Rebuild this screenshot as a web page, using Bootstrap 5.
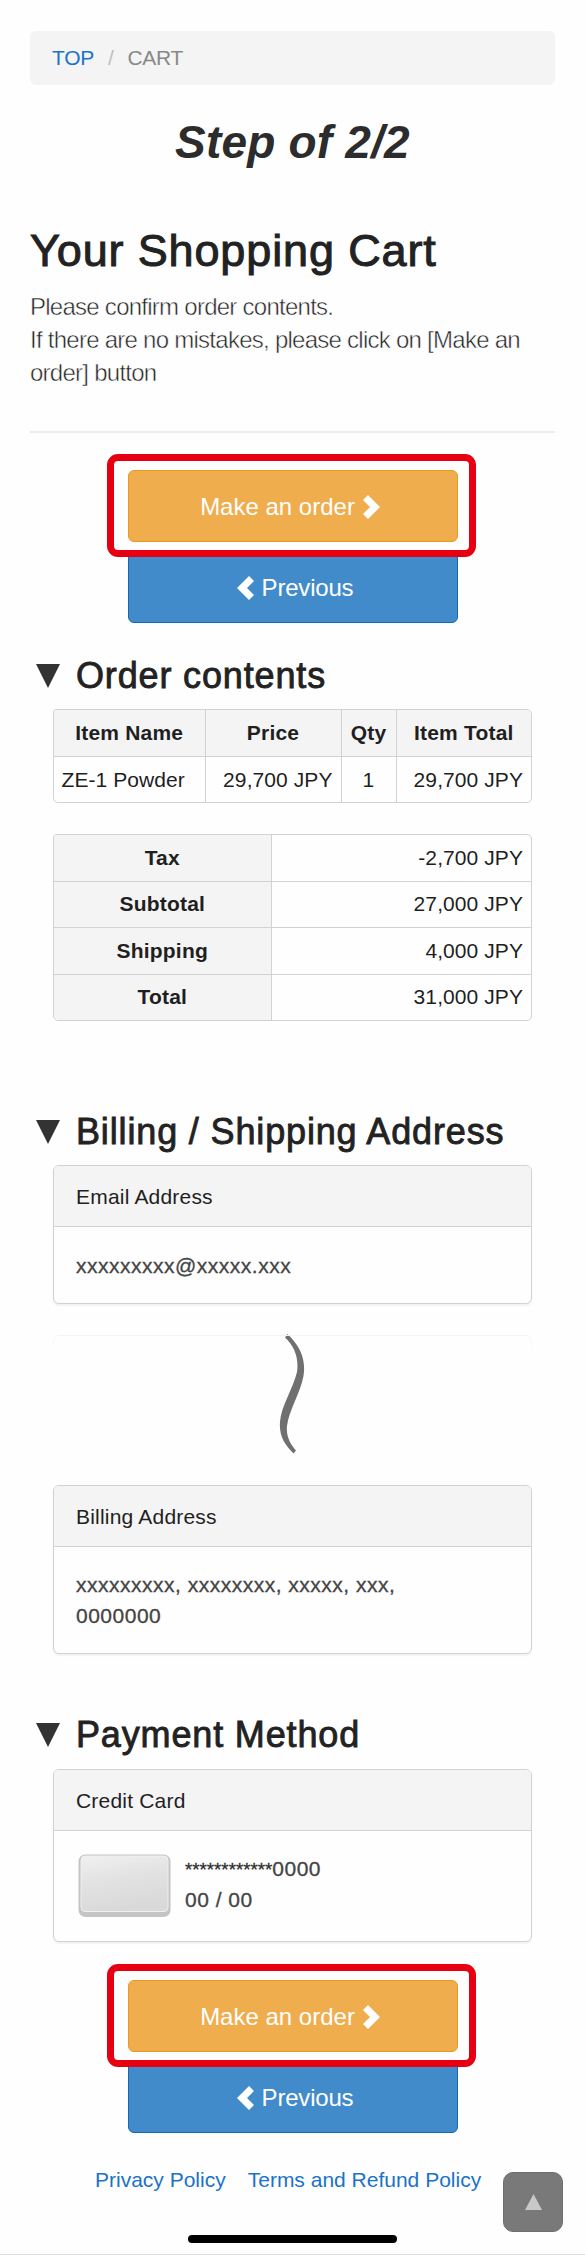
<!DOCTYPE html>
<html lang="en">
<head>
<meta charset="utf-8">
<meta name="viewport" content="width=device-width, initial-scale=1">
<title>Your Shopping Cart</title>
<link href="https://cdn.jsdelivr.net/npm/bootstrap@5.3.0/dist/css/bootstrap.min.css" rel="stylesheet">
<style>
body{font-family:"Liberation Sans",Arial,sans-serif;font-size:21px;line-height:30px;color:#1f1f1f;background:#fefefe;overflow-x:hidden}
a{color:#1a73c8;text-decoration:none}
.page{height:2255px;padding:31px 30px 0;border-bottom:1px solid #ddd;position:relative}
.crumbs{height:54px;background:#f4f4f4;border-radius:6px;padding:0 22px;margin:0;letter-spacing:-.3px}
.crumbs .breadcrumb-item+.breadcrumb-item{padding-left:14px}
.crumbs .breadcrumb-item+.breadcrumb-item::before{padding-right:14px;color:#c0c0c0}
.crumbs .active{color:#888}
.step{font-size:46px;line-height:50px;font-weight:700;font-style:italic;margin:32px 0 0;color:#2c2c2c;letter-spacing:.2px}
.headline{font-size:45px;line-height:50px;font-weight:400;margin:59px 0 0;letter-spacing:.86px;-webkit-text-stroke:1px #222;color:#222;white-space:nowrap}
.intro{font-size:24px;line-height:33px;margin:14px 0 0;color:#222;letter-spacing:-.74px;-webkit-text-stroke:.5px #fefefe;white-space:nowrap}
.rule{height:2px;background:#ececec;margin:42px 0 21px}
.actions{width:369px;margin:0 auto;position:relative;left:-1px}
.ring{border:7px solid #e60012;border-radius:11px;padding:9px 11px 8px 14px;height:103px;position:relative;z-index:1;background:#fefefe}
.act{display:flex;align-items:center;justify-content:center;width:330px;height:72px;border-radius:6px;font-size:24px;border:1px solid;color:#fff;padding:2px 0 0}
.act-go{background:#f0ad4e;border-color:#eb9a1f;padding-right:6px}
.act-back{background:#428bca;border-color:#1468b5;margin:-6px 0 0 21px;padding-left:4px;letter-spacing:-.2px}
.sect{font-size:36px;line-height:40px;font-weight:400;letter-spacing:.85px;color:#222;-webkit-text-stroke:.85px #222;display:flex;align-items:center;padding-left:5.5px;margin:0;white-space:nowrap}
.sect svg{margin-right:16.5px;flex:none}
.block{margin:0 23px}
.grid{width:479px;border:1px solid #d2d2d2;border-radius:3px 5px 5px 5px;border-collapse:separate;border-spacing:0;table-layout:fixed;margin:0;overflow:hidden;color:#1f1f1f;letter-spacing:.08px}
.grid th,.grid td{padding:0 8px 0 7.5px;border:0 solid #d2d2d2;border-right-width:1px;border-bottom-width:1px;white-space:nowrap;font-size:21px;vertical-align:middle}
.grid tr>:last-child{border-right-width:0}
.grid tbody tr:last-child>*{border-bottom-width:0}
.grid th{background:#f4f4f4;text-align:center;letter-spacing:.2px}
.box{border:1px solid #d2d2d2;border-radius:6px;background:#fefefe;box-shadow:0 1.5px 1.5px rgba(0,0,0,.05);overflow:hidden}
.box-title{background:#f4f4f4;border-bottom:1px solid #d2d2d2;padding:1px 22px 0;height:61px;display:flex;align-items:center;letter-spacing:.2px}
.box-text{padding:0 22px;color:#444;letter-spacing:.5px;-webkit-text-stroke:.3px #444;line-height:31px}
.ghost{height:16px;border:1px solid #f4f4f4;border-bottom:0;border-radius:6px 6px 0 0;-webkit-mask:linear-gradient(#000,transparent);mask:linear-gradient(#000,transparent)}
.stars{font-size:18.7px;letter-spacing:0;color:#1f1f1f}
.totop{position:absolute;left:503px;top:2172px;width:60px;height:60px;border-radius:10px;background:#797979;border:1px solid #6e6e6e}
.homebar{position:absolute;left:188px;top:2235px;width:209px;height:8px;border-radius:4px;background:#000}
</style>
</head>
<body>
<main class="page">
  <nav><ol class="breadcrumb crumbs align-items-center">
    <li class="breadcrumb-item"><a href="#">TOP</a></li><li class="breadcrumb-item active">CART</li>
  </ol></nav>
  <h2 class="step text-center">Step of 2/2</h2>
  <h1 class="headline">Your Shopping Cart</h1>
  <p class="intro">Please confirm order contents.<br>If there are no mistakes, please click on [Make an<br>order] button</p>
  <div class="rule"></div>

  <div class="actions">
    <div class="ring"><button class="btn act act-go">Make an order<svg class="ms-2" width="17" height="24" viewBox="0 0 17 24"><path d="M5 0L17 12 5 24 0 19 7 12 0 5z" fill="#fff"/></svg></button></div>
    <button class="btn act act-back"><svg class="me-2" width="17" height="24" viewBox="0 0 17 24"><path d="M12 0L0 12 12 24 17 19 10 12 17 5z" fill="#fff"/></svg>Previous</button>
  </div>

  <h2 class="sect" style="margin-top:33px"><svg width="24" height="24" viewBox="0 0 24 24"><path d="M0 0H24L12 24z" fill="#333"/></svg><span>Order contents</span></h2>
  <div class="block" style="margin-top:13px">
    <table class="grid">
      <colgroup><col style="width:152px"><col style="width:135.5px"><col style="width:55.5px"><col></colgroup>
      <thead><tr style="height:47px"><th>Item Name</th><th>Price</th><th>Qty</th><th>Item Total</th></tr></thead>
      <tbody><tr style="height:45px"><td>ZE-1 Powder</td><td class="text-end">29,700 JPY</td><td class="text-center">1</td><td class="text-end">29,700 JPY</td></tr></tbody>
    </table>
    <table class="grid" style="margin-top:31px">
      <colgroup><col style="width:218px"><col></colgroup>
      <tbody>
        <tr style="height:46.5px"><th>Tax</th><td class="text-end">-2,700 JPY</td></tr>
        <tr style="height:46.5px"><th>Subtotal</th><td class="text-end">27,000 JPY</td></tr>
        <tr style="height:46.5px"><th>Shipping</th><td class="text-end">4,000 JPY</td></tr>
        <tr style="height:45.5px"><th>Total</th><td class="text-end">31,000 JPY</td></tr>
      </tbody>
    </table>
  </div>

  <h2 class="sect" style="margin-top:91px"><svg width="24" height="24" viewBox="0 0 24 24"><path d="M0 0H24L12 24z" fill="#333"/></svg><span>Billing / Shipping Address</span></h2>
  <div class="block" style="margin-top:13px">
    <div class="box" style="height:139px"><div class="box-title">Email Address</div><div class="box-text" style="padding-top:23px">xxxxxxxxx@xxxxx.xxx</div></div>
    <div class="ghost" style="margin-top:31px"></div>
    <svg class="d-block" style="margin:-17px 0 0 226px" width="26" height="120" viewBox="0 0 26 120"><path d="M8.500 0C22 13 27 26 24.500 42C21 60 10 76 8 92C7 102 11 110 17 116.500L14.500 119.500C5 110 0 101 1 88C2 72 14 55 18 38C20 23 15 12 6 3.500Z" fill="#707070"/></svg>
    <div class="box" style="margin-top:31px;height:169px"><div class="box-title">Billing Address</div><div class="box-text" style="padding-top:22px">xxxxxxxxx, xxxxxxxx, xxxxx, xxx,<br>0000000</div></div>
  </div>

  <h2 class="sect" style="margin-top:61px"><svg width="24" height="24" viewBox="0 0 24 24"><path d="M0 0H24L12 24z" fill="#333"/></svg><span>Payment Method</span></h2>
  <div class="block" style="margin-top:14px">
    <div class="box" style="height:173px"><div class="box-title">Credit Card</div>
      <div class="d-flex" style="padding:23px 0 0 24px">
        <svg width="93" height="64" viewBox="0 0 93 64"><defs><linearGradient id="k" x2=".3" y2="1"><stop stop-color="#f0f0f0"/><stop offset=".5" stop-color="#e2e2e2"/><stop offset="1" stop-color="#d9d9d9"/></linearGradient></defs><rect x=".5" y=".5" width="92" height="62.500" rx="7" fill="#c4c4c4"/><rect x="3" y="2" width="87" height="55.500" rx="4" fill="url(#k)" stroke="#efefef"/></svg>
        <div class="box-text" style="padding:0 0 0 14px;line-height:30px"><span class="stars">************</span>0000<br>00 / 00</div>
      </div>
    </div>
  </div>

  <div class="actions" style="margin-top:22px">
    <div class="ring"><button class="btn act act-go">Make an order<svg class="ms-2" width="17" height="24" viewBox="0 0 17 24"><path d="M5 0L17 12 5 24 0 19 7 12 0 5z" fill="#fff"/></svg></button></div>
    <button class="btn act act-back"><svg class="me-2" width="17" height="24" viewBox="0 0 17 24"><path d="M12 0L0 12 12 24 17 19 10 12 17 5z" fill="#fff"/></svg>Previous</button>
  </div>
  <footer class="d-flex" style="margin:32px 0 0 65px;gap:22px"><a href="#">Privacy Policy</a><a href="#">Terms and Refund Policy</a></footer>
  <a class="totop d-flex align-items-center justify-content-center" href="#" aria-label="Back to top"><svg width="17" height="16" viewBox="0 0 17 16"><path d="M8.500 0L17 16H0z" fill="#c8c8c8"/></svg></a>
  <div class="homebar"></div>
</main>
<script src="https://cdn.jsdelivr.net/npm/bootstrap@5.3.0/dist/js/bootstrap.bundle.min.js"></script>
</body>
</html>
